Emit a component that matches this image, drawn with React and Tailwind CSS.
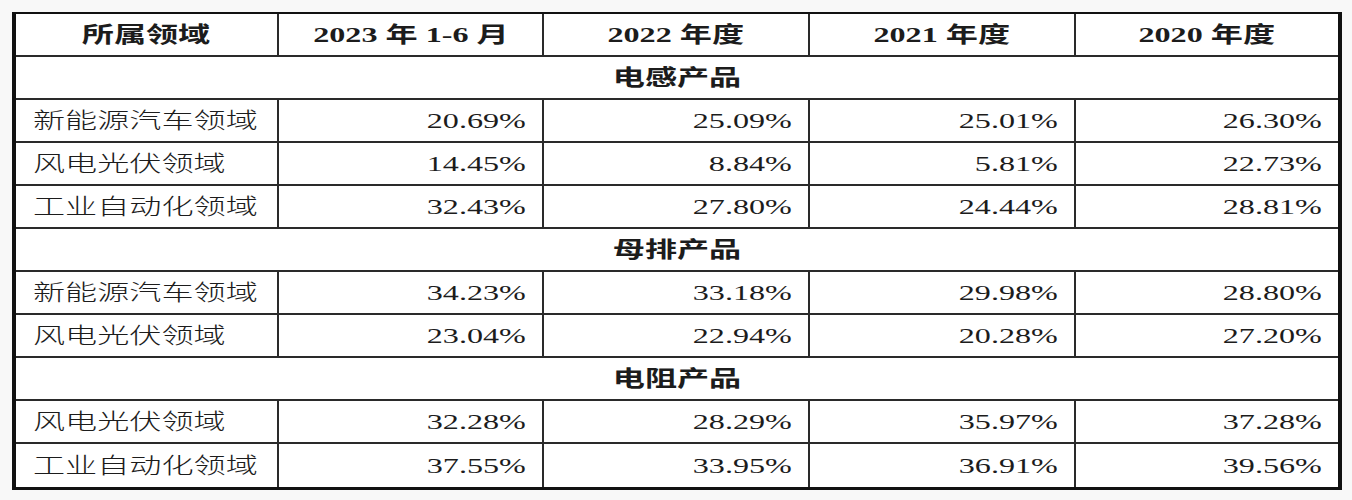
const COLS = ['2023 年 1-6 月', '2022 年度', '2021 年度', '2020 年度'];

const SECTIONS = [
  {
    title: '电感产品',
    rows: [
      ['新能源汽车领域', '20.69%', '25.09%', '25.01%', '26.30%'],
      ['风电光伏领域', '14.45%', '8.84%', '5.81%', '22.73%'],
      ['工业自动化领域', '32.43%', '27.80%', '24.44%', '28.81%'],
    ],
  },
  {
    title: '母排产品',
    rows: [
      ['新能源汽车领域', '34.23%', '33.18%', '29.98%', '28.80%'],
      ['风电光伏领域', '23.04%', '22.94%', '20.28%', '27.20%'],
    ],
  },
  {
    title: '电阻产品',
    rows: [
      ['风电光伏领域', '32.28%', '28.29%', '35.97%', '37.28%'],
      ['工业自动化领域', '37.55%', '33.95%', '36.91%', '39.56%'],
    ],
  },
];

// widths include the right rule of each cell
const W = ['w-[263px]', 'w-[265px]', 'w-[266px]', 'w-[266px]', 'flex-1'];

function Stretch({ children, origin = 'origin-center', className = '' }) {
  return (
    <span className={`inline-block scale-x-[1.46] whitespace-nowrap ${origin} ${className}`}>
      {children}
    </span>
  );
}

function Row({ children, last }) {
  return (
    <div className={`flex h-[43px] ${last ? '' : 'border-b-2 border-[#2a2a2a]'}`}>{children}</div>
  );
}

export default function App() {
  const total = SECTIONS.reduce((n, s) => n + s.rows.length + 1, 0);
  let idx = 0;

  return (
    <div className="h-[500px] w-[1352px] bg-[#f8f8f8] pt-[12px] pl-[12px] font-['Liberation_Serif','Noto_Sans_CJK_SC',serif] text-[22px] leading-none text-[#1c1c1c]">
      <div className="w-[1330px] bg-white border-l-[4px] border-r-[4px] border-t-2 border-b-[3px] border-[#111]">
        {/* header */}
        <Row>
          <div className={`${W[0]} flex items-center justify-center border-r-2 border-[#2a2a2a] font-bold`}>
            <Stretch>所属领域</Stretch>
          </div>
          {COLS.map((c, i) => (
            <div
              key={c}
              className={`${W[i + 1]} flex items-center justify-center font-bold ${i < 3 ? 'border-r-2 border-[#2a2a2a]' : ''}`}
            >
              <Stretch>{c}</Stretch>
            </div>
          ))}
        </Row>

        {SECTIONS.map((s) => {
          idx += 1;
          return (
            <div key={s.title}>
              <Row>
                <div className="flex flex-1 items-center justify-center font-bold">
                  <Stretch>{s.title}</Stretch>
                </div>
              </Row>
              {s.rows.map((r) => {
                idx += 1;
                const last = idx === total;
                return (
                  <Row key={r[0] + r[1]} last={last}>
                    <div className={`${W[0]} flex items-center pl-[17px] border-r-2 border-[#2a2a2a] font-light`}>
                      <Stretch origin="origin-left">{r[0]}</Stretch>
                    </div>
                    {r.slice(1).map((v, i) => (
                      <div
                        key={i}
                        className={`${W[i + 1]} flex items-center justify-end pr-[16px] ${i < 3 ? 'border-r-2 border-[#2a2a2a]' : ''}`}
                      >
                        <Stretch origin="origin-right">{v}</Stretch>
                      </div>
                    ))}
                  </Row>
                );
              })}
            </div>
          );
        })}
      </div>
    </div>
  );
}
